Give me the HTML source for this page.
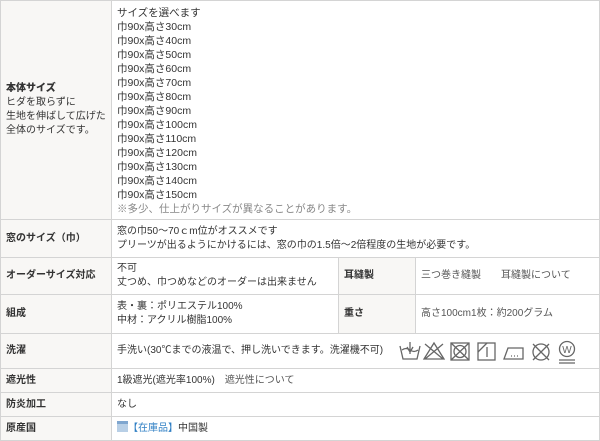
<!DOCTYPE html>
<html><head><meta charset="utf-8"><style>
*{margin:0;padding:0;box-sizing:border-box}
body{width:600px;height:441px;background:#fff;font-family:"Liberation Sans","Noto Sans CJK JP",sans-serif;font-size:10px;color:#333;overflow:hidden}
table{border-collapse:collapse;width:600px;table-layout:fixed;position:absolute;left:0;top:0}
td{border:1px solid #d4d4d4;vertical-align:middle;padding:0 5px;line-height:14px;white-space:nowrap}
td.h{background:#f8f7f5;font-weight:bold;padding-left:5px}
.g{color:#888}
.b{color:#2f7fc4}
.l{color:#555}
</style></head><body>
<table>
<colgroup><col style="width:111px"><col style="width:227px"><col style="width:77px"><col></colgroup>
<tr style="height:219px"><td class="h"><b>本体サイズ</b><br><span style="font-weight:normal">ヒダを取らずに<br>生地を伸ばして広げた<br>全体のサイズです。</span></td>
<td colspan="3" style="padding-top:2px;font-size:10.5px">サイズを選べます<br>巾90x高さ30cm<br>巾90x高さ40cm<br>巾90x高さ50cm<br>巾90x高さ60cm<br>巾90x高さ70cm<br>巾90x高さ80cm<br>巾90x高さ90cm<br>巾90x高さ100cm<br>巾90x高さ110cm<br>巾90x高さ120cm<br>巾90x高さ130cm<br>巾90x高さ140cm<br>巾90x高さ150cm<br><span class="g">※多少、仕上がりサイズが異なることがあります。</span></td></tr>
<tr style="height:38px"><td class="h">窓のサイズ（巾）</td><td colspan="3">窓の巾50～70ｃm位がオススメです<br>プリーツが出るようにかけるには、窓の巾の1.5倍～2倍程度の生地が必要です。</td></tr>
<tr style="height:37px"><td class="h">オーダーサイズ対応</td><td>不可<br>丈つめ、巾つめなどのオーダーは出来ません</td><td class="h">耳縫製</td><td class="l">三つ巻き縫製　　耳縫製について</td></tr>
<tr style="height:39px"><td class="h">組成</td><td>表・裏：ポリエステル100%<br>中材：アクリル樹脂100%</td><td class="h">重さ</td><td class="l">高さ100cm1枚：約200グラム</td></tr>
<tr style="height:35px"><td class="h">洗濯</td><td colspan="3" style="position:relative">手洗い(30℃までの液温で、押し洗いできます。洗濯機不可)
<svg style="position:absolute;left:286px;top:5px" width="186" height="26" viewBox="0 0 186 26" fill="none" stroke="#666" stroke-width="1.3">
<path d="M2 7 L5 20 H19 L22 7 M4 11 Q8 8 12 11 Q16 14 20 11"/><path d="M12 3 V15 M9 8 L12 13 L15 8"/>
<path d="M36 4 L26 20 H46 Z M27 5 L45 20 M45 5 L27 20"/>
<rect x="53" y="4" width="18" height="17"/><circle cx="62" cy="12.5" r="6"/><path d="M53 4 L71 21 M71 4 L53 21"/>
<rect x="80" y="4" width="17" height="17"/><path d="M80 13 L89 4 M89 8 V18"/>
<path d="M106 20 L110 9 H125 V20 Z"/><path d="M113 17 h1 M116 17 h1 M119 17 h1"/>
<circle cx="143" cy="13" r="8"/><path d="M135 5 L151 21 M151 5 L135 21"/>
<circle cx="169" cy="10" r="7.5"/><text x="169" y="14" font-size="10" text-anchor="middle" fill="#666" stroke="none" font-family="Liberation Sans">W</text><path d="M161 21 H177 M161 24 H177"/>
</svg></td></tr>
<tr style="height:24px"><td class="h">遮光性</td><td colspan="3">1級遮光(遮光率100%)　<span class="l">遮光性について</span></td></tr>
<tr style="height:24px"><td class="h">防炎加工</td><td colspan="3">なし</td></tr>
<tr style="height:24px"><td class="h">原産国</td><td colspan="3"><span style="display:inline-block;width:11px;height:11px;background:#b8cfe6;border-top:3px solid #7fa6cf;vertical-align:-1px"></span><span class="b">【在庫品】</span>中国製</td></tr>
</table>
</body></html>
